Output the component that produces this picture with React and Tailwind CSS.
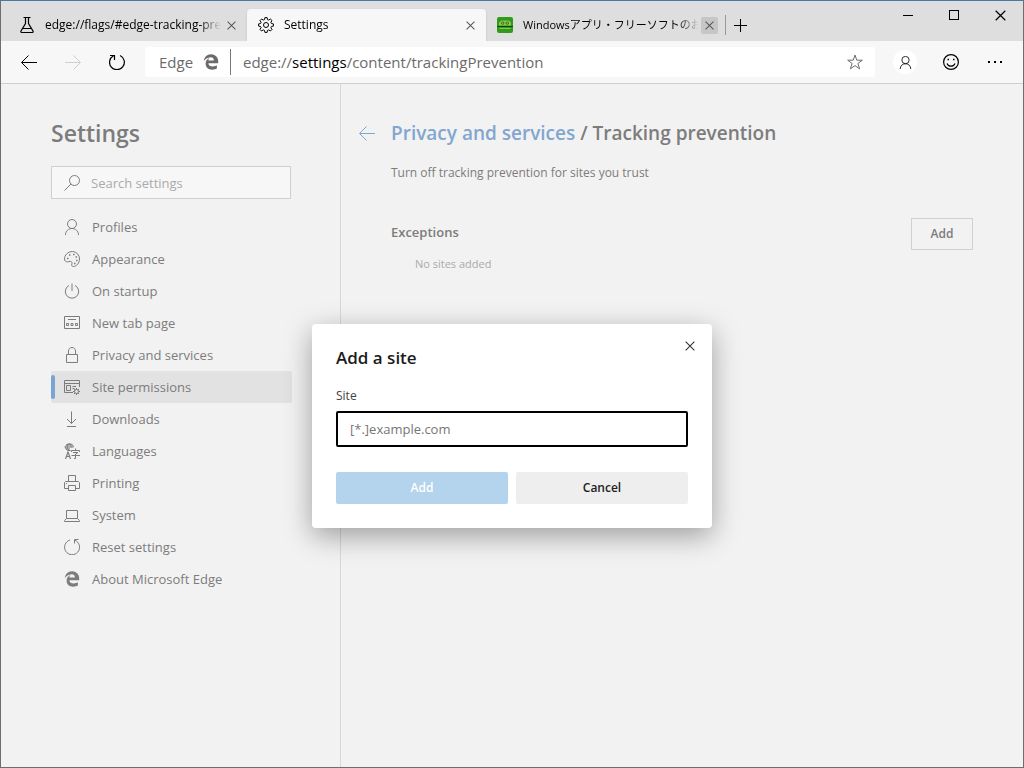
import { useState } from "react";
import { FaEdgeLegacy } from "react-icons/fa";

const Icon = ({ children, className = "size-4" }) => (
  <svg
    viewBox="0 0 16 16"
    fill="none"
    stroke="currentColor"
    strokeWidth="1"
    aria-hidden="true"
    className={`shrink-0 ${className}`}
  >
    {children}
  </svg>
);

const FlaskIcon = () => (
  <Icon>
    <path d="M4.5.5h7M6.5.5v6L2 14c-.4.8 0 1.5.8 1.5h10.4c.8 0 1.2-.7.8-1.5L9.5 6.5v-6M4 11.5h8" strokeWidth="1.2" />
  </Icon>
);

const GearIcon = () => (
  <Icon>
    <path d="M6.9.6h2.2l.4 2 1.2.5 1.7-1.1 1.6 1.6-1.1 1.7.5 1.2 2 .4v2.2l-2 .4-.5 1.2 1.1 1.7-1.6 1.6-1.7-1.1-1.2.5-.4 2H6.9l-.4-2-1.2-.5-1.7 1.1L2 12.4l1.1-1.7-.5-1.2-2-.4V6.900l2-.4.5-1.200L2 3.600 3.600 2l1.700 1.100 1.200-.5z" />
    <circle cx="8" cy="8" r="2.500" />
  </Icon>
);

const CloseIcon = ({ className }) => (
  <Icon className={className}>
    <path d="M1 1l14 14M15 1L1 15" strokeWidth="1.800" />
  </Icon>
);

const ArrowLeftIcon = () => (
  <Icon>
    <path d="M16 8.500H.8M7.500 1.500l-7 7 7 7" />
  </Icon>
);

const ArrowRightIcon = () => (
  <Icon>
    <path d="M0 8.500h15.200M8.500 1.500l7 7-7 7" />
  </Icon>
);

const RefreshIcon = () => (
  <Icon>
    <path d="M11 1.500a7.400 7.400 0 1 1-6.500.2M1 1.500h4.500V6" strokeWidth="1.200" />
  </Icon>
);

const PersonIcon = ({ className }) => (
  <Icon className={className}>
    <circle cx="8" cy="5" r="4.500" />
    <path d="M1.500 16c0-4 3-6.500 6.500-6.500s6.500 2.500 6.500 6.500" />
  </Icon>
);

const StarIcon = () => (
  <Icon>
    <path d="M8 1l1.800 5.200h5.500l-4.400 3.300 1.700 5.300L8 11.600l-4.600 3.200 1.700-5.300L.7 6.200h5.500z" />
  </Icon>
);

const SmileIcon = () => (
  <Icon>
    <circle cx="8" cy="8" r="7.400" strokeWidth="1.200" />
    <path d="M4 9.500c.7 1.800 2.200 2.700 4 2.700s3.300-.9 4-2.700" strokeWidth="1.200" />
    <path d="M4.500 5.500H6M10 5.500h1.500" strokeWidth="1.600" />
  </Icon>
);

const SearchIcon = () => (
  <Icon>
    <circle cx="10.500" cy="5.500" r="5" />
    <path d="M7 9L.5 15.500" />
  </Icon>
);

const PaletteIcon = () => (
  <Icon>
    <path d="M8.500.5a7.300 7.300 0 0 1 7 7.500c0 4-3 7.500-6 7.500-1.500 0-2.300-1-1.700-2.300.6-1.400 0-2.900-1.600-2.900-1 0-1.700.6-2.700.6C1.700 10.900.5 9.700.5 8c0-4 3.500-7.500 8-7.500z" />
    <path d="M3 7.500h1.500M5 4h1.500M9 3.500h1.500M11.500 6H13M12 9.500h1.500M10 12.500h1.500" strokeWidth="1.500" />
  </Icon>
);

const PowerIcon = () => (
  <Icon>
    <path d="M8 .5V8M5 2.500a6.700 6.700 0 1 0 6 0" />
  </Icon>
);

const NewTabIcon = () => (
  <Icon>
    <path d="M.5 1.500h15v12H.5zM4 4.500h8M2.500 8.500h2v2h-2zM7 8.500h2v2H7zM11.500 8.500h2v2h-2z" />
  </Icon>
);

const LockIcon = () => (
  <Icon>
    <path d="M2.500 7.500h11v8h-11zM4.500 7.500V4C4.500 2 6 .5 8 .5S11.500 2 11.500 4v3.500" />
  </Icon>
);

const PermissionsIcon = () => (
  <Icon>
    <path d="M9 13.500H.5v-12h15V8M.5 4.500h15M2.500 6.500h4v5h-4zM8.500 7.500H12M8.500 9.500h2" />
    <circle cx="12.500" cy="12.500" r="2" />
    <path d="M12.500 9v1.500M12.500 14.500V16M9 12.500h1.500M14.500 12.500H16M10 10l1 1M14 14l1 1M15 10l-1 1M11 14l-1 1" />
  </Icon>
);

const DownloadIcon = () => (
  <Icon>
    <path d="M7.500.5v12M3 8l4.500 4.500L12 8M3 15.500h9" />
  </Icon>
);

const LanguagesIcon = () => (
  <Icon>
    <path d="M6.500 7.500H4a4 3.500 0 1 1 5.500-3.500M.5 4h9M2 2h6M2 6h4M5 .5c-2 2-2 5 0 7M5 .5c1.500 1 2 2.500 2 4" />
    <path d="M1.500 16L4 9l2.500 7M2.500 13.500h3" strokeWidth="1.200" />
    <path d="M11.500 5.500V7M7.500 9V7.500h8V9M9 9.500h5L11.500 11v4.500H10M7.500 12.500H16" />
  </Icon>
);

const PrinterIcon = () => (
  <Icon>
    <path d="M4.500 6V.5h7V6M4.500 13.500h-4v-6l1-1h13l1 1v6h-4M4.500 10.500h7v5h-7zM2 8.500h1" />
  </Icon>
);

const LaptopIcon = () => (
  <Icon>
    <path d="M2.500 3.500h11v8h-11zM2.500 11.500l-2 2v1h15v-1l-2-2" />
  </Icon>
);

const ResetIcon = () => (
  <Icon>
    <path d="M6 1A7.500 7.500 0 1 0 11 1.300M14.500.5h-4v4" />
  </Icon>
);

const EdgeIcon = () => <FaEdgeLegacy className="size-4 shrink-0" aria-hidden="true" />;

const RobotIcon = () => (
  <svg viewBox="0 0 16 16" className="size-4 shrink-0" aria-hidden="true">
    <rect width="16" height="16" rx="2" fill="#2f9a1c" />
    <path d="M2 8.500V7c0-2.200 1.500-3.500 3.500-3.500h5C12.500 3.500 14 4.800 14 7v1.500z" fill="#8cc84b" />
    <circle cx="5.800" cy="6" r="1.600" fill="#1c5a12" />
    <circle cx="10.200" cy="6" r="1.600" fill="#1c5a12" />
    <circle cx="5.800" cy="6" r=".8" fill="#b8e08a" />
    <circle cx="10.200" cy="6" r=".8" fill="#b8e08a" />
    <path d="M0 9.500h16" stroke="#14430c" />
    <path d="M2.500 11.500h11" stroke="#8cc84b" />
  </svg>
);

const tabs = [
  { title: "edge://flags/#edge-tracking-prevention", icon: FlaskIcon },
  { title: "Settings", icon: GearIcon, active: true },
  { title: "Windowsアプリ・フリーソフトのおすすめ", icon: RobotIcon, hovered: true, small: true },
];

const menu = [
  { label: "Profiles", icon: PersonIcon },
  { label: "Appearance", icon: PaletteIcon },
  { label: "On startup", icon: PowerIcon },
  { label: "New tab page", icon: NewTabIcon },
  { label: "Privacy and services", icon: LockIcon },
  { label: "Site permissions", icon: PermissionsIcon, active: true },
  { label: "Downloads", icon: DownloadIcon },
  { label: "Languages", icon: LanguagesIcon },
  { label: "Printing", icon: PrinterIcon },
  { label: "System", icon: LaptopIcon },
  { label: "Reset settings", icon: ResetIcon },
  { label: "About Microsoft Edge", icon: EdgeIcon },
];

const Tab = ({ title, icon: TabIcon, active, hovered, small }) => (
  <div
    className={`flex h-8 w-[239px] min-w-0 items-center gap-2.5 pr-[7px] pl-[11px] ${
      active ? "rounded-t bg-[#f7f7f7] shadow-sm" : ""
    }`}
  >
    <TabIcon />
    <span
      className={`-mr-2 min-w-0 flex-1 overflow-hidden whitespace-nowrap [mask-image:linear-gradient(to_right,black_88%,transparent)] ${
        small ? "text-[11px]" : "text-[12px]"
      }`}
    >
      {title}
    </span>
    <button
      aria-label={`Close ${title}`}
      className={`flex size-[17px] items-center justify-center rounded-xs text-[#555] ${
        hovered ? "bg-[#c6c6c6]" : ""
      }`}
    >
      <CloseIcon className="size-[9px]" />
    </button>
  </div>
);

const TitleBar = () => (
  <div className="flex h-10 bg-[#dedede]">
    <div className="flex min-w-0 flex-1 items-end pl-[7px]">
      {tabs.map((tab) => (
        <Tab key={tab.title} {...tab} />
      ))}
      <div className="flex h-8 items-center">
        <div className="h-5 w-px bg-[#999]" />
        <button aria-label="New tab" className="flex size-7 items-center justify-center">
          <Icon className="size-[13px]">
            <path d="M8 0v16M0 8h16" strokeWidth="1.300" />
          </Icon>
        </button>
      </div>
    </div>
    <div className="flex h-7">
      <button aria-label="Minimize" className="flex w-[46px] items-center justify-center">
        <span className="h-px w-2.5 bg-black" />
      </button>
      <button aria-label="Maximize" className="flex w-[46px] items-center justify-center">
        <span className="size-2.5 border border-black" />
      </button>
      <button aria-label="Close window" className="flex w-[46px] items-center justify-center">
        <CloseIcon className="size-[11px]" />
      </button>
    </div>
  </div>
);

const ToolButton = ({ label, disabled, className = "w-8", children }) => (
  <button
    aria-label={label}
    disabled={disabled}
    className={`flex h-8 shrink-0 items-center justify-center disabled:text-[#cfcfcf] ${className}`}
  >
    {children}
  </button>
);

const Toolbar = () => (
  <div className="flex h-[43px] items-center gap-3 border-b border-[#d0d0d0] bg-[#f7f7f7] px-3">
    <ToolButton label="Back">
      <ArrowLeftIcon />
    </ToolButton>
    <ToolButton label="Forward" disabled>
      <ArrowRightIcon />
    </ToolButton>
    <ToolButton label="Refresh">
      <RefreshIcon />
    </ToolButton>
    <div className="flex h-[30px] min-w-0 flex-1 items-center rounded-xs bg-white pr-3 pl-3.5 text-[15px] text-[#6b6b6b]">
      <span className="w-11">Edge</span>
      <EdgeIcon />
      <div className="mr-3 ml-[11px] h-[26px] w-px bg-[#767676]" />
      <span className="min-w-0 flex-1 truncate">
        edge://<span className="text-black">settings</span>/content/trackingPrevention
      </span>
      <button aria-label="Add to favorites">
        <StarIcon />
      </button>
    </div>
    <ToolButton label="Profile" className="w-9">
      <span className="flex size-6 items-center justify-center rounded-full bg-white text-black">
        <PersonIcon className="size-[13px]" />
      </span>
    </ToolButton>
    <ToolButton label="Send feedback">
      <SmileIcon />
    </ToolButton>
    <ToolButton label="Settings and more">
      <Icon>
        <path d="M1 8h2M7 8h2M13 8h2" strokeWidth="2" />
      </Icon>
    </ToolButton>
  </div>
);

const Sidebar = () => (
  <aside className="w-[340px] shrink-0 border-r border-[#d8d8d8] pr-12 pl-[50px] text-[#7c7c7c]">
    <h1 className="pt-[31px] text-[23px] leading-9 font-semibold">Settings</h1>
    <div className="mt-[15px] flex h-[33px] w-60 items-center gap-[11px] border border-[#d0d0d0] bg-[#f7f7f7] px-3">
      <SearchIcon />
      <input
        type="search"
        aria-label="Search settings"
        placeholder="Search settings"
        className="min-w-0 flex-1 bg-transparent pt-0.5 text-[13px] outline-none placeholder:text-[#aaa]"
      />
    </div>
    <nav className="mt-3">
      {menu.map(({ label, icon: MenuIcon, active }) => (
        <a
          key={label}
          href="#"
          className={`flex h-8 items-center rounded-xs text-[13px] ${active ? "bg-[#e2e2e2]" : ""}`}
        >
          <span className={`mr-[9px] h-6 w-1 rounded-xs ${active ? "bg-[#78a6d0]" : ""}`} />
          <MenuIcon />
          <span className="ml-3 pt-0.5">{label}</span>
        </a>
      ))}
    </nav>
  </aside>
);

const TrackingPrevention = () => (
  <main className="min-w-0 flex-1 pr-[50px] pl-[18px] text-[#7c7c7c]">
    <div className="flex items-center gap-4 pt-[31px]">
      <button aria-label="Go back" className="text-[#7fa8d0]">
        <ArrowLeftIcon />
      </button>
      <h2 className="text-[19px] leading-9 font-semibold">
        <a href="#" className="text-[#82a6cf]">
          Privacy and services
        </a>{" "}
        / Tracking prevention
      </h2>
    </div>
    <div className="pl-8">
      <p className="mt-3 text-[12px] leading-5">Turn off tracking prevention for sites you trust</p>
      <div className="mt-[35px] flex justify-between">
        <h3 className="text-[13px] leading-7 font-semibold">Exceptions</h3>
        <button className="h-8 w-[62px] border border-[#d0d0d0] text-[12px] font-semibold">Add</button>
      </div>
      <p className="pl-6 text-[11px] leading-7 text-[#aaa]">No sites added</p>
    </div>
  </main>
);

const AddSiteDialog = ({ onClose }) => {
  const [site, setSite] = useState("");

  return (
    <div className="absolute inset-0 flex items-center justify-center">
      <form
        role="dialog"
        aria-labelledby="dialog-title"
        onSubmit={(e) => e.preventDefault()}
        className="w-[400px] rounded bg-white p-6 shadow-[0_8px_28px_rgba(0,0,0,0.35)]"
      >
        <div className="flex h-5 items-start justify-between">
          <h2 id="dialog-title" className="text-[17px] leading-5 font-semibold text-[#1b1b1b]">
            Add a site
          </h2>
          <button
            type="button"
            aria-label="Close"
            onClick={onClose}
            className="-mt-4 -mr-4 flex size-7 items-center justify-center text-[#333]"
          >
            <CloseIcon className="size-2.5" />
          </button>
        </div>
        <label htmlFor="site" className="mt-[18px] block text-[12px] leading-5 text-[#444]">
          Site
        </label>
        <input
          id="site"
          value={site}
          onChange={(e) => setSite(e.target.value)}
          placeholder="[*.]example.com"
          className="mt-[5px] block h-9 w-full rounded-xs border-2 border-black px-3 text-[13px] outline-none placeholder:text-[#767676]"
        />
        <div className="mt-[25px] flex gap-2 text-[12px] font-semibold">
          <button disabled={!site} className="h-8 flex-1 rounded-xs bg-[#b4d3ed] text-white">
            Add
          </button>
          <button type="button" onClick={onClose} className="h-8 flex-1 rounded-xs bg-[#eeeeee] text-[#222]">
            Cancel
          </button>
        </div>
      </form>
    </div>
  );
};

const App = () => {
  const [dialogOpen, setDialogOpen] = useState(true);

  return (
    <div className="flex min-h-screen flex-col border border-t-[#4479ad] border-r-[#6e6e6e] border-b-[#6e6e6e] border-l-[#6e6e6e] bg-[#f2f2f2] font-['Open_Sans','Noto_Sans_CJK_JP',sans-serif] text-black">
      <TitleBar />
      <Toolbar />
      <div className="relative flex flex-1">
        <Sidebar />
        <TrackingPrevention />
        {dialogOpen && <AddSiteDialog onClose={() => setDialogOpen(false)} />}
      </div>
    </div>
  );
};

export default App;
